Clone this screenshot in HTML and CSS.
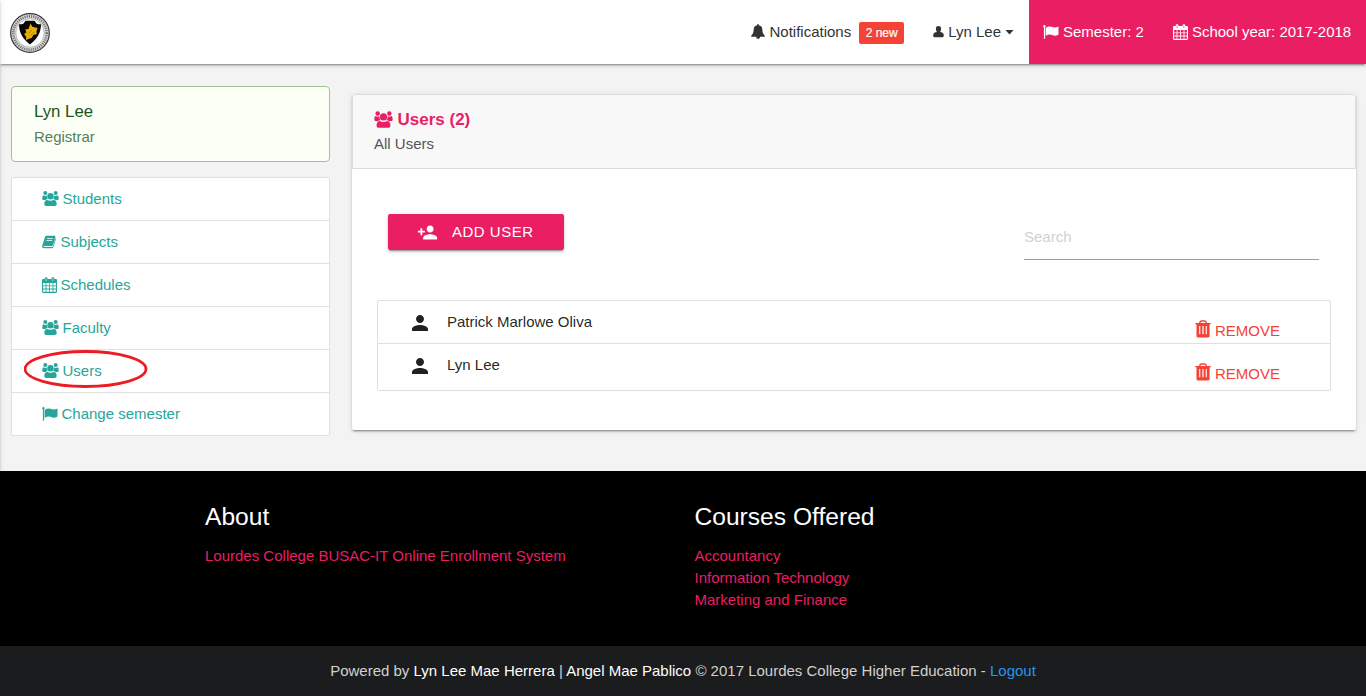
FILE: index.html
```
<!DOCTYPE html>
<html lang="en">
<head>
<meta charset="utf-8">
<title>Users</title>
<link rel="stylesheet" href="styles.css">
</head>
<body>
<svg class="sprite" aria-hidden="true">
  <symbol id="bell" viewBox="64 0 1664 1792"><path d="M912 1696q0-16-16-16-59 0-101.500-42.500t-42.500-101.500q0-16-16-16t-16 16q0 73 51.500 124.500t124.500 51.500q16 0 16-16zm816-288q0 52-38 90t-90 38h-448q0 106-75 181t-181 75-181-75-75-181h-448q-52 0-90-38t-38-90q50-42 91-88t85-119.500 74.500-158.500 50-206 19.500-260q0-152 117-282.500t307-158.500q-8-19-8-39 0-40 28-68t68-28 68 28 28 68q0 20-8 39 190 28 307 158.500t117 282.500q0 139 19.500 260t50 206 74.500 158.500 85 119.500 91 88z"/></symbol>
  <symbol id="user" viewBox="0 0 11 12"><path d="M5.500 0C7.500 0 8.100 1.300 8.100 2.800S7.600 5.300 7 6.100c1.900.3 3.800.9 3.800 3.200 0 1.300-.4 2-1.300 2h-8c-.9 0-1.300-.7-1.300-2C.2 7 2.100 6.400 4 6.100 3.400 5.300 2.900 4.300 2.900 2.800S3.500 0 5.500 0z"/></symbol>
  <symbol id="users" viewBox="0 0 17 15"><circle cx="3.300" cy="2.100" r="2"/><circle cx="13.700" cy="2.100" r="2"/><circle cx="8.500" cy="5.200" r="3.200"/><path d="M1.400 4.300c1.100.8 2.400.8 3.500.3-.2 1.500.2 2.600 1 3.500-1 0-1.700.3-2.300 1H2C.9 9.100.3 8.600.3 7.600c0-1.500.2-2.900 1.100-3.300zM15.600 4.300c-1.100.8-2.400.8-3.500.3.200 1.500-.2 2.600-1 3.500 1 0 1.700.3 2.300 1H15c1.100 0 1.700-.5 1.700-1.500 0-1.500-.2-2.900-1.100-3.300zM5.200 8.900c1.800 1 4.800 1 6.600 0 2.100.1 2.900 1.900 2.900 4.100 0 1.200-.8 1.900-1.900 1.900H4.200c-1.100 0-1.900-.7-1.900-1.900 0-2.200.8-4 2.900-4.100z"/></symbol>
  <symbol id="calendar" viewBox="0 0 15 16"><path fill-rule="evenodd" d="M1.200 2.100H2.700V1.600C2.700.7 3.300.2 4.100.2s1.400.5 1.400 1.400v.5h4V1.600c0-.9.600-1.400 1.400-1.400s1.400.5 1.400 1.400v.5h1.500c.7 0 1.200.5 1.200 1.200v11.400c0 .7-.5 1.200-1.200 1.200H1.200C.5 15.900 0 15.400 0 14.700V3.300c0-.7.500-1.200 1.200-1.200zM3.800 1.400v2.700h.6V1.400zm6.800 0v2.700h.6V1.400zM1.100 6v2.400h2.500V6zm3.300 0v2.400h2.700V6zm3.500 0v2.400h2.700V6zm3.500 0v2.400h2.500V6zM1.100 9.200v2.400h2.500V9.200zm3.300 0v2.400h2.700V9.200zm3.500 0v2.400h2.700V9.200zm3.500 0v2.400h2.500V9.200zM1.100 12.400v2.400h2.500v-2.400zm3.300 0v2.400h2.700v-2.400zm3.500 0v2.400h2.700v-2.400zm3.500 0v2.400h2.500v-2.400z"/></symbol>
  <symbol id="flag" viewBox="0 0 16 15"><path d="M.4 1.900a1.200 1.200 0 1 1 1.700.3V13.700H.9V2.200zM2.700 2.800C5.800.9 7.600 1.200 9.500 2.100c2 .9 3.600.3 6-.7v8c-2 1.200-4 1.700-6.200.7C7.300 9.100 5.500 9.300 2.700 10.800z"/></symbol>
  <symbol id="book" viewBox="0 0 14 14"><path fill-rule="evenodd" d="M4.700.7H12.200c1 0 1.400.6 1.100 1.500L11 10c-.3.800-.8 1.100-1.600 1.100H2c-.8 0-.9.900.1.900h7.800c.6 0 .9-.3 1.100-.8l2.400-7.900c.5.300.6.700.4 1.300l-2.300 7.400c-.2.700-.8 1.200-1.600 1.200H2C.6 13.200-.3 12 .2 10.800L3 2c.3-.8.800-1.300 1.700-1.300zM5.100 3.300l-.2.700h5.800l.2-.7zM4.500 5.300l-.2.700h5.800l.2-.7z"/></symbol>
  <symbol id="person" viewBox="4 4 16 16"><path d="M12 12c2.210 0 4-1.790 4-4s-1.790-4-4-4-4 1.790-4 4 1.790 4 4 4zm0 2c-2.670 0-8 1.340-8 4v2h16v-2c0-2.660-5.330-4-8-4z"/></symbol>
  <symbol id="person-add" viewBox="0 0 24 24"><path d="M15 12c2.210 0 4-1.790 4-4s-1.790-4-4-4-4 1.790-4 4 1.790 4 4 4zm-9-2V7H4v3H1v2h3v3h2v-3h3v-2H6zm9 4c-2.670 0-8 1.340-8 4v2h16v-2c0-2.660-5.330-4-8-4z"/></symbol>
  <symbol id="trash" viewBox="0 0 16 18"><path fill-rule="evenodd" d="M.3 3h3.800C4.200 1.200 5.100.3 6.500.3h3c1.400 0 2.300.9 2.400 2.700h3.800v1.300h-1.100v11.800c0 .9-.5 1.400-1.400 1.400H2.900c-.9 0-1.400-.5-1.400-1.400V4.300H.3zM5.500 3h5c-.1-.9-.5-1.300-1.200-1.300H6.700C6 1.700 5.600 2.100 5.500 3zM4.200 6v8.300h1.100V6zm3.200 0v8.300h1.200V6zm3.300 0v8.300h1.100V6z"/></symbol>
</svg>

<header class="topbar">
  <svg class="logo" viewBox="0 0 40 40">
    <circle cx="20" cy="20" r="19.300" fill="#d9d9d9" stroke="#333" stroke-width="1.200"/>
    <circle class="logo-ring" cx="20" cy="20" r="16.700"/>
    <circle cx="20" cy="20" r="14.200" fill="#fff" stroke="#999" stroke-width=".6"/>
    <path d="M15.500 7.800h9l2 2.700c1.700.8 3.200 1 4.500.8 0 8-3.500 14.500-11 20.300C12.500 25.800 9 19.300 9 11.300c1.500.2 3 0 4.500-.8z" fill="#080808"/>
    <path d="M15 16.500l3.500-.5 2-5.500 1.800 3.200 5.300 1.400-1.300 3.800.7 2.200-3.800.8-1.300 2.800-6 2.200.4-3-2.200-3 2.400-1.600z" fill="#e8ad08"/>
    <path d="M18 21l4-4m-2 6l4-4" stroke="#9a6d00" stroke-width=".6"/>
  </svg>
  <nav class="topnav">
    <a class="nav-item notifications"><svg class="i-bell"><use href="#bell"/></svg><span>Notifications</span><span class="badge">2 new</span></a>
    <a class="nav-item account"><svg class="i-user"><use href="#user"/></svg><span>Lyn Lee</span><i class="caret"></i></a>
    <div class="term">
      <span class="nav-item"><svg class="i-flag"><use href="#flag"/></svg><span>Semester: 2</span></span>
      <span class="nav-item year"><svg class="i-cal"><use href="#calendar"/></svg><span>School year: 2017-2018</span></span>
    </div>
  </nav>
</header>

<main class="main">
  <aside class="sidebar">
    <section class="profile">
      <div class="profile-name">Lyn Lee</div>
      <div class="profile-role">Registrar</div>
    </section>
    <nav class="menu">
      <a><svg class="i-users"><use href="#users"/></svg>Students</a>
      <a><svg class="i-book"><use href="#book"/></svg>Subjects</a>
      <a><svg class="i-cal"><use href="#calendar"/></svg>Schedules</a>
      <a><svg class="i-users"><use href="#users"/></svg>Faculty</a>
      <a class="active"><svg class="i-users"><use href="#users"/></svg>Users<svg class="marker" viewBox="0 0 124 40"><ellipse cx="61.500" cy="20" rx="60.500" ry="17.500"/></svg></a>
      <a><svg class="i-flag"><use href="#flag"/></svg>Change semester</a>
    </nav>
  </aside>
  <section class="card">
    <header class="card-head">
      <h1><svg class="i-title"><use href="#users"/></svg>Users (2)</h1>
      <p>All Users</p>
    </header>
    <div class="toolbar">
      <button class="add"><svg><use href="#person-add"/></svg>ADD USER</button>
      <div class="search">Search</div>
    </div>
    <ul class="list">
      <li><svg class="i-person"><use href="#person"/></svg><span class="name">Patrick Marlowe Oliva</span><a class="remove"><svg><use href="#trash"/></svg>REMOVE</a></li>
      <li><svg class="i-person"><use href="#person"/></svg><span class="name">Lyn Lee</span><a class="remove"><svg><use href="#trash"/></svg>REMOVE</a></li>
    </ul>
  </section>
</main>

<footer class="footer">
  <div class="columns">
    <section>
      <h2>About</h2>
      <a>Lourdes College BUSAC-IT Online Enrollment System</a>
    </section>
    <section>
      <h2>Courses Offered</h2>
      <a>Accountancy</a>
      <a>Information Technology</a>
      <a>Marketing and Finance</a>
    </section>
  </div>
  <div class="copyright"><p>Powered by <b>Lyn Lee Mae Herrera</b> | <b>Angel Mae Pablico</b> © 2017 Lourdes College Higher Education - <a>Logout</a></p></div>
</footer>
<div class="edge"></div>
</body>
</html>
```

FILE: styles.css
```
* { box-sizing: border-box; }
body {
  margin: 0;
  height: 696px;
  overflow: hidden;
  background: #f3f3f3;
  color: rgba(0, 0, 0, .87);
  font: 15px/22px "Liberation Sans", Arial, sans-serif;
}
svg { display: block; flex: none; fill: currentColor; }
h1, h2, p, ul { margin: 0; padding: 0; }
.sprite { display: none; }

.topbar, .card {
  box-shadow: 0 2px 2px 0 rgba(0, 0, 0, .14), 0 1px 5px 0 rgba(0, 0, 0, .12), 0 3px 1px -2px rgba(0, 0, 0, .2);
}
.topbar {
  position: relative;
  display: flex;
  justify-content: space-between;
  height: 64px;
  padding-left: 10px;
  background: #fff;
  color: #333;
}
.logo { width: 40px; height: 40px; margin-top: 13px; }
.logo-ring { fill: none; stroke: #777; stroke-width: 2.6; stroke-dasharray: 1.2 1; }
.topnav, .term { display: flex; }
.nav-item { display: flex; align-items: center; height: 64px; }
.notifications { padding-right: 29px; }
.badge {
  width: 45px;
  height: 22px;
  margin-left: 8px;
  margin-top: 2px;
  border-radius: 2px;
  background: #f44336;
  color: #fff;
  font-size: 12px;
  text-align: center;
  -webkit-text-stroke: .2px #fff;
}
.account { padding-right: 15px; }
.caret { width: 9px; height: 5px; margin-left: 4px; background: #333; clip-path: polygon(0 0, 100% 0, 50% 100%); }
.term { width: 337px; padding-left: 14px; background: #e91e63; color: #fff; }
.year { margin-left: 29px; }
.i-bell { width: 14px; height: 15px; margin: 0 4px 1px 0; }
.i-user { width: 11px; height: 12px; margin: 0 4px 1px 0; }
.i-flag { width: 16px; height: 15px; margin-right: 4px; }
.menu .i-flag { margin-right: 3.500px; }
.i-cal { width: 15px; height: 16px; margin-right: 4px; }
.menu .i-cal { margin: 0 3.500px 1px 0; }
.i-users { width: 17px; height: 15px; margin: 0 3.500px 2px 0; }
.i-book { width: 14px; height: 14px; margin: 0 4.500px 1px 0; }

.main {
  display: grid;
  grid-template-columns: 319px 1004px;
  column-gap: 22px;
  align-items: start;
  height: 407px;
  padding: 22px 0 0 11px;
}
.profile {
  height: 76px;
  margin-bottom: 15px;
  padding: 14px 22px;
  border: 1px solid #a3c293;
  border-radius: 4px;
  background: #fcfff5;
}
.profile-name { font-size: 16.800px; color: #1a531b; }
.profile-role { margin-top: 3px; color: #56805a; }
.menu { border: 1px solid #e0e0e0; border-radius: 2px; background: #fff; }
.menu a {
  position: relative;
  display: flex;
  align-items: center;
  height: 43px;
  padding-left: 30px;
  border-bottom: 1px solid #e0e0e0;
  color: #26a69a;
}
.menu a:last-child { height: 42px; border-bottom: 0; }
.marker { position: absolute; left: 12px; top: -1px; width: 124px; height: 40px; }
.marker ellipse { fill: none; stroke: #ed1c24; stroke-width: 2.8; }

.card { height: 336px; margin-top: 8px; border-radius: 2px; background: #fff; }
.card-head {
  height: 75px;
  padding: 14px 21px;
  border: 1px solid #dcdcdc;
  border-radius: 3px 3px 0 0;
  background: #f8f8f8;
}
.card-head h1 { display: flex; align-items: center; font-size: 17px; line-height: 22px; color: #e91e63; }
.card-head p { margin-top: 2px; color: #555; }
.i-title { width: 19px; height: 17px; margin: 0 4.500px 2px 0; }
.toolbar { display: flex; justify-content: space-between; padding: 45px 37px 0 36px; }
.add {
  display: flex;
  align-items: center;
  width: 176px;
  height: 36px;
  padding: 0 0 0 29px;
  border: 0;
  border-radius: 2px;
  background: #e91e63;
  box-shadow: 0 2px 2px 0 rgba(0, 0, 0, .14), 0 1px 5px 0 rgba(0, 0, 0, .12), 0 3px 1px -2px rgba(0, 0, 0, .2);
  color: #fff;
  font: 15px/22px "Liberation Sans", Arial, sans-serif;
  letter-spacing: .5px;
}
.add svg { width: 21px; height: 21px; margin-right: 14px; }
.search { width: 295px; height: 46px; padding-top: 12px; border-bottom: 1px solid #9e9e9e; color: #d1d1d1; }
.list { width: 954px; margin: 40px 0 0 25px; border: 1px solid #e0e0e0; border-radius: 2px; list-style: none; }
.list li { display: flex; height: 43px; padding: 10px 50px 0 34px; border-bottom: 1px solid #e0e0e0; }
.list li:last-child { height: 46px; border-bottom: 0; }
.i-person { width: 16px; height: 16px; margin-top: 4px; }
.name { margin-left: 19px; flex: 1; }
.remove { display: flex; align-items: center; height: 22px; margin-top: 9px; color: #f44336; }
.remove svg { width: 16px; height: 18px; margin: 0 4px 4px 0; }

.footer { background: #000; color: #fff; }
.columns { display: grid; grid-template-columns: 489.500px 1fr; height: 175px; padding: 32px 0 0 205px; }
.columns h2 { margin-bottom: 14px; font-size: 24.600px; font-weight: 400; line-height: 28px; }
.columns a { display: block; color: #e91e63; }
.copyright { height: 50px; padding-top: 14px; background: #1b1c1d; color: #d1d1d1; text-align: center; }
.copyright b { color: #fff; font-weight: 400; }
.copyright a { color: #2196f3; }

.edge {
  position: absolute;
  left: -10px;
  top: 0;
  width: 10px;
  height: 471px;
  box-shadow: 0 2px 2px 0 rgba(0, 0, 0, .14), 0 1px 5px 0 rgba(0, 0, 0, .12);
}
```
